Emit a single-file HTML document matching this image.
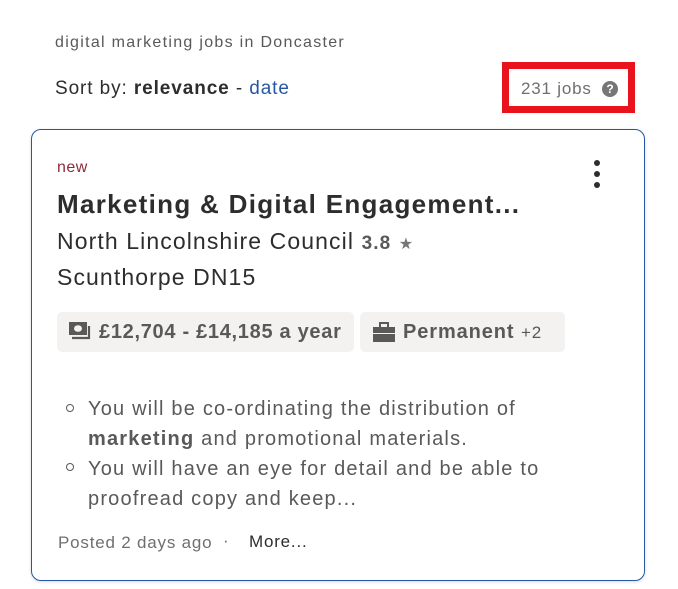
<!DOCTYPE html>
<html><head><meta charset="utf-8"><style>
body{margin:0;width:678px;height:589px;background:#fff;position:relative;font-family:"Liberation Sans",sans-serif;overflow:hidden}
.a{position:absolute;white-space:nowrap}
.card{position:absolute;left:31px;top:129px;width:612px;height:450px;border:1px solid #2557a7;border-radius:10px;box-shadow:0 1px 3px rgba(0,0,0,.15)}
.tag{position:absolute;top:312px;height:40px;background:#f3f2f1;border-radius:5px}
</style></head><body>
<div class="a" style="left:55px;top:34px;font-size:16px;color:#595959;letter-spacing:1.3px">digital marketing jobs in Doncaster</div>
<div class="a" style="left:55px;top:78px;font-size:19px;color:#2d2d2d;letter-spacing:0.9px">Sort by: <b>relevance</b> - <span style="color:#2557a7">date</span></div>
<div class="a" style="left:502px;top:62px;width:119px;height:37px;border:7px solid #e8131c"></div>
<div class="a" style="left:521px;top:79px;font-size:17px;color:#6f6f6f;letter-spacing:0.8px">231 jobs</div>
<div class="a" style="left:602px;top:81px;width:16px;height:16px;border-radius:50%;background:#767676;color:#fff;font-size:12px;font-weight:bold;text-align:center;line-height:16px">?</div>
<div class="card"></div>
<div class="a" style="left:57px;top:159px;font-size:16px;color:#8d2b3b;letter-spacing:0.5px">new</div>
<div class="a" style="left:594px;top:160px;width:6px;height:6px;border-radius:50%;background:#2d2d2d"></div>
<div class="a" style="left:594px;top:171px;width:6px;height:6px;border-radius:50%;background:#2d2d2d"></div>
<div class="a" style="left:594px;top:182px;width:6px;height:6px;border-radius:50%;background:#2d2d2d"></div>
<div class="a" style="left:57px;top:189px;font-size:26px;font-weight:bold;color:#2d2d2d;letter-spacing:1.3px">Marketing &amp; Digital Engagement...</div>
<div class="a" style="left:57px;top:228px;font-size:23px;color:#2d2d2d;letter-spacing:1.1px">North Lincolnshire Council <span style="font-size:19px;font-weight:bold;color:#595959">3.8</span> <span style="font-size:16px;color:#767676">★</span></div>
<div class="a" style="left:57px;top:264px;font-size:23px;color:#2d2d2d;letter-spacing:1.1px">Scunthorpe DN15</div>
<div class="tag" style="left:57px;width:297px"></div>
<div class="tag" style="left:360px;width:205px"></div>
<svg class="a" style="left:68px;top:321px" width="24" height="22" viewBox="0 0 24 22"><rect x="1" y="1" width="18" height="13" fill="#595959"/><ellipse cx="10" cy="7.5" rx="4" ry="3.3" fill="#f3f2f1"/><path d="M21 5v12H4" stroke="#595959" stroke-width="2.2" fill="none"/></svg>
<div class="a" style="left:99px;top:321px;font-size:20px;font-weight:bold;color:#595959;letter-spacing:0.7px">£12,704 - £14,185 a year</div>
<svg class="a" style="left:372px;top:322px" width="24" height="20" viewBox="0 0 24 20"><rect x="8" y="1" width="8" height="5" fill="none" stroke="#595959" stroke-width="2"/><rect x="1" y="5" width="22" height="6" fill="#595959"/><rect x="1" y="12" width="22" height="8" fill="#595959"/></svg>
<div class="a" style="left:403px;top:321px;font-size:20px;font-weight:bold;color:#595959;letter-spacing:0.9px">Permanent <span style="font-weight:normal;font-size:17px">+2</span></div>
<div class="a" style="left:66px;top:404px;width:6px;height:6px;border:1.5px solid #595959;border-radius:50%"></div>
<div class="a" style="left:66px;top:463px;width:6px;height:6px;border:1.5px solid #595959;border-radius:50%"></div>
<div class="a" style="left:88px;top:394px;font-size:20px;line-height:30px;color:#595959;letter-spacing:1.2px">You will be co-ordinating the distribution of<br><b>marketing</b> and promotional materials.<br>You will have an eye for detail and be able to<br>proofread copy and keep...</div>
<div class="a" style="left:58px;top:533px;font-size:17px;color:#6f6f6f;letter-spacing:0.8px">Posted 2 days ago</div>
<div class="a" style="left:223px;top:531px;font-size:17px;color:#6f6f6f">·</div>
<div class="a" style="left:249px;top:532px;font-size:17px;color:#2d2d2d;letter-spacing:0.8px">More...</div>
</body></html>
